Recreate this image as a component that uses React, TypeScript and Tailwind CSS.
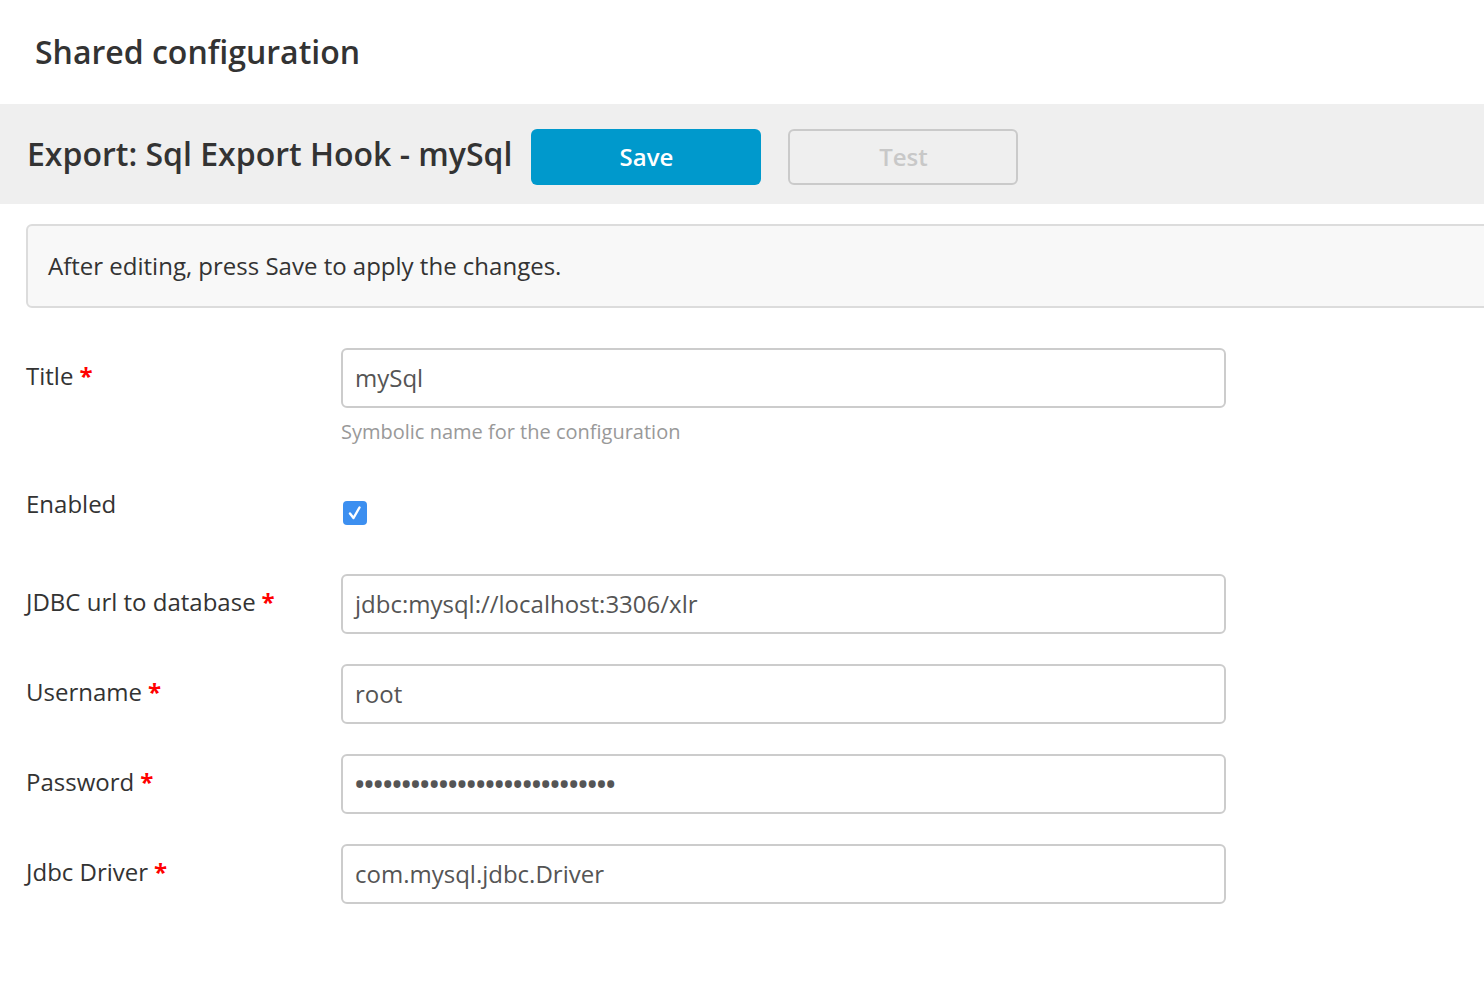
import type { ReactNode } from "react";

const font = { fontFamily: '"Open Sans", "Noto Sans", sans-serif' };

export default function App() {
  return (
    <div className="min-h-[1008px] w-[1484px] overflow-hidden bg-white text-[#333]" style={font}>
      <div className="flex h-[104px] items-center px-[35px]">
        <h1 className="text-[32px] font-semibold text-[#333]">Shared configuration</h1>
      </div>

      <div className="flex h-[100px] items-center bg-[#efefef] px-[27px]">
        <h2 className="text-[32px] font-semibold text-[#333]">Export: Sql Export Hook - mySql</h2>
        <button
          type="button"
          className="ml-[19px] mt-[6px] h-[56px] w-[230px] rounded-[6px] bg-[#0099cc] text-[24px] font-semibold text-white"
        >
          Save
        </button>
        <button
          type="button"
          disabled
          className="ml-[27px] mt-[6px] h-[56px] w-[230px] rounded-[6px] border-2 border-[#cacaca] text-[24px] font-semibold text-[#c8c8c8]"
        >
          Test
        </button>
      </div>

      <div className="ml-[26px] mt-[20px] flex h-[84px] w-[1480px] items-center rounded-[6px] border-2 border-[#dcdcdc] bg-[#f8f8f8] px-[20px]">
        <p className="text-[24px]">After editing, press Save to apply the changes.</p>
      </div>

      <div className="ml-[26px] mt-[40px]">
        <Row label="Title" required>
          <Field value="mySql" />
          <p className="mt-[10px] text-[20px] leading-[28px] text-[#999]">Symbolic name for the configuration</p>
        </Row>

        <div className="mt-[40px] flex">
          <div className="w-[315px] text-[24px] leading-[36px]">Enabled</div>
          <div className="pl-[2px] pt-[15px]">
            <span className="flex h-[24px] w-[24px] items-center justify-center rounded-[4px] bg-[#3c8ff0]">
              <svg viewBox="0 0 24 24" className="h-[24px] w-[24px]" fill="none" stroke="white" strokeWidth="2.4" strokeLinecap="round" strokeLinejoin="round">
                <path d="M7 12.5 L10.5 17 L16.5 6.5" />
              </svg>
            </span>
          </div>
        </div>

        <div className="mt-[49px] flex flex-col gap-[30px]">
          <Row label="JDBC url to database" required>
            <Field value="jdbc:mysql://localhost:3306/xlr" />
          </Row>
          <Row label="Username" required>
            <Field value="root" />
          </Row>
          <Row label="Password" required>
            <Field value={"•".repeat(28)} password />
          </Row>
          <Row label="Jdbc Driver" required>
            <Field value="com.mysql.jdbc.Driver" />
          </Row>
        </div>
      </div>
    </div>
  );
}

function Row({ label, required, children }: { label: string; required?: boolean; children: ReactNode }) {
  return (
    <div className="flex">
      <div className="w-[315px] pt-[10px] text-[24px] leading-[36px] text-[#333]">
        {label}
        {required && <span className="ml-[6px] font-bold text-[#ff0000]">*</span>}
      </div>
      <div className="w-[885px]">{children}</div>
    </div>
  );
}

function Field({ value, password }: { value: string; password?: boolean }) {
  return (
    <div className="flex h-[60px] items-center rounded-[6px] border-2 border-[#cccccc] bg-white px-[12px]">
      <span
        className={
          password
            ? "text-[25px] font-bold tracking-[-0.1px] text-[#555]"
            : "text-[24px] text-[#555]"
        }
      >
        {value}
      </span>
    </div>
  );
}
